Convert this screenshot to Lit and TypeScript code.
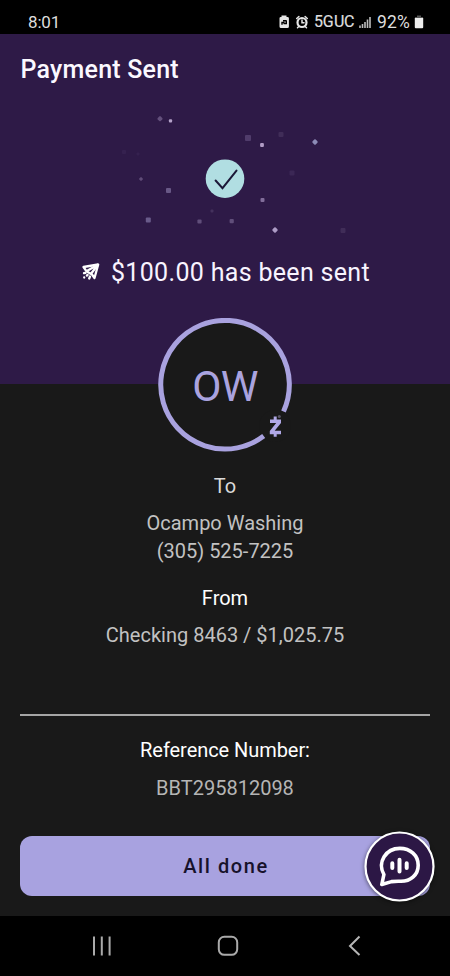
import { LitElement, html, css, svg } from "lit";
import { customElement } from "lit/decorators.js";

// Confetti around the check mark: x, y, size, colour, opacity, diamond
const CONFETTI: [number, number, number, string, number, boolean][] = [
  [160, 118.7, 4.2, "#75638e", 0.75, true],
  [170.5, 120.8, 3.2, "#b5a3ca", 1, false],
  [248, 138, 6, "#594574", 0.8, false],
  [262, 145, 3.8, "#b09bc4", 1, false],
  [281, 134.5, 5, "#4a3763", 0.65, false],
  [315, 142, 4.4, "#8c8bb6", 1, true],
  [124, 152, 4, "#3b2755", 0.6, false],
  [138, 154, 3, "#3b2755", 0.6, false],
  [141, 179, 3.2, "#6d5985", 0.8, true],
  [168.5, 190.5, 5, "#6f5f8d", 0.9, false],
  [292, 173, 5, "#412d5b", 0.7, false],
  [262.5, 200, 4, "#8b77a3", 0.9, false],
  [148.3, 220, 5, "#706391", 0.9, false],
  [212, 211, 3, "#4a3763", 0.8, false],
  [199.5, 221.5, 4.2, "#66547f", 0.9, false],
  [231.7, 221.2, 4.2, "#66547f", 0.9, false],
  [275, 230, 4.4, "#ad9cc6", 1, true],
  [343, 230.5, 5, "#49365f", 0.7, false],
];

@customElement("app-root")
export class AppRoot extends LitElement {
  static styles = css`
    :host {
      display: flex;
      flex-direction: column;
      width: 450px;
      height: 976px;
      overflow: hidden;
      background: #191919;
      font-family: Roboto, sans-serif;
      color: #fff;
    }
    svg { display: block; flex: none; }
    .status {
      height: 34px;
      flex: none;
      box-sizing: border-box;
      background: #000;
      display: flex;
      align-items: center;
      padding: 10px 26px 0 28px;
      color: #dedede;
      font-size: 17px;
      line-height: 24px;
      white-space: nowrap;
    }
    .time { flex: 1; letter-spacing: -0.15px; }
    .network { width: 41px; font-size: 16px; word-spacing: -3px; letter-spacing: -0.3px; margin: 0 4px 0 5px; -webkit-text-stroke: 0.2px #dedede; }
    .battery { width: 36px; margin: 0 1px 0 6px; font-size: 17.5px; letter-spacing: 0.2px; }
    .hero {
      height: 350px;
      flex: none;
      background: #2e1a47;
      display: flex;
      flex-direction: column;
      align-items: center;
    }
    h1 {
      margin: 20px 0 0 20.5px;
      align-self: flex-start;
      font-size: 25px;
      line-height: 32px;
      font-weight: 500;
      letter-spacing: 0.22px;
      color: #fbf8ff;
    }
    .burst { margin-top: 14px; }
    .sent {
      display: flex;
      align-items: center;
      margin-top: 17px;
      height: 36px;
      padding-left: 1px;
      font-size: 25px;
      line-height: 36px;
      color: #f8f4ff;
      letter-spacing: 0.32px;
      gap: 11px;
    }
    .details {
      flex: 1;
      display: flex;
      flex-direction: column;
      align-items: center;
      font-size: 20px;
      line-height: 28px;
      color: #c2c2c2;
    }
    .avatar {
      position: relative;
      width: 134px;
      height: 134px;
      margin-top: -66px;
    }
    .initials {
      position: absolute;
      inset: 0;
      text-align: center;
      line-height: 138px;
      font-size: 42.5px;
      letter-spacing: -0.8px;
      color: #aaa3df;
    }
    .label { color: #fff; }
    .to { color: #dadada; margin-top: 20px; }
    .name { margin-top: 9px; }
    .phone { margin-top: -0.5px; }
    .from { margin-top: 19px; }
    .account { margin-top: 9px; }
    .rule {
      width: 410px;
      height: 2px;
      background: #a5a5a5;
      margin-top: 65.5px;
    }
    .ref { margin-top: 20px; letter-spacing: -0.06px; }
    .number { margin-top: 9.5px; color: #b5b5b5; }
    .action { position: relative; width: 410px; margin-top: 34px; }
    button {
      display: block;
      width: 100%;
      height: 60px;
      border: 0;
      padding: 0 0 0 2px;
      border-radius: 12px;
      background: #a8a2e0;
      color: #17122b;
      font: 500 20px Roboto, sans-serif;
      letter-spacing: 1.6px;
    }
    .chat { position: absolute; right: -5px; top: -5px; filter: drop-shadow(0 1px 2px #0008); }
    .nav {
      height: 60px;
      flex: none;
      background: #000;
      display: flex;
      align-items: center;
      justify-content: space-between;
      padding: 0 83px 0 86px;
      box-sizing: border-box;
    }
    .home { position: relative; left: -3px; }
  `;

  render() {
    return html`
      <div class="status">
        <span class="time">8:01</span>
        <svg width="31" height="16" viewBox="0 0 31 16">
          <path fill="#e6e6e6" d="M3.500 1.500h5v1.400h1q1.400 0 1.400 1.400v8.200q0 1.500-1.500 1.500H3q-1.500 0-1.500-1.500V4.300q0-1.400 1.400-1.400h.6z"/>
          <path fill="none" stroke="#000" stroke-width="1.400" d="M4 10.700V8.500h2.500M8.300 6.200v3.300H5.500M5 6.800h3"/>
          <circle cx="24" cy="8.500" r="4.500" fill="none" stroke="#e6e6e6" stroke-width="2.200"/>
          <path fill="none" stroke="#e6e6e6" stroke-width="1.500" stroke-linecap="round" d="M18.700 4.500l2.200-2M29.300 4.500l-2.200-2M20.800 12.500l-1.300 1.300M27.200 12.500l1.300 1.300M24 6v2.700h2"/>
        </svg>
        <span class="network">5G UC</span>
        <svg width="12" height="14" viewBox="0 0 12 14">
          <path stroke="#bdbdbd" stroke-width="1.600" d="M1 13v-2.500M3.500 13V9M6 13V7M8.500 13V4.500M11 13V2"/>
        </svg>
        <span class="battery">92%</span>
        <svg width="10" height="14" viewBox="0 0 10 14">
          <path fill="#555" d="M3 .5h4v1.500h2v2H1V2h2z"/>
          <path fill="#eee" d="M.8 3h8.400v9.200q0 1-1 1H1.800q-1 0-1-1z"/>
        </svg>
      </div>
      <div class="hero">
        <h1>Payment Sent</h1>
        <svg class="burst" width="250" height="138" viewBox="100 100 250 138">
          ${CONFETTI.map(
            ([x, y, s, c, o, d]) => svg`<rect x=${x - s / 2} y=${y - s / 2} width=${s} height=${s}
              rx="1" fill=${c} opacity=${o} transform=${`rotate(${d ? 45 : 0} ${x} ${y})`}/>`
          )}
          <circle cx="225" cy="178.700" r="19.300" fill="#b1dee2"/>
          <path d="M215.600 180.500l6.900 7.600 14-17.500" fill="none" stroke="#1c1838" stroke-width="2" stroke-linecap="round"/>
        </svg>
        <div class="sent">
          <svg width="19" height="22" viewBox="0 0 19 22" fill="none" stroke="#fff" stroke-width="2.300" stroke-linejoin="round">
            <path d="M17.200 2.500L2.500 5 5.400 9.200 11 12.500 13.500 16z"/>
            <path d="M17.200 2.500L5.400 9.200M17.200 2.500L9.800 12"/>
            <path stroke-linecap="round" d="M4.500 10.800L3 11.200M6.600 13L5.900 13.500M3.200 15.500v.1M9 14.500L8.200 16.500"/>
          </svg>
          <span>$100.00 has been sent</span>
        </div>
      </div>
      <div class="details">
        <div class="avatar">
          <svg width="134" height="134" viewBox="158 318 134 134">
            <circle cx="225" cy="384.700" r="64" fill="#191919"/>
            <circle cx="275" cy="426" r="16" fill="#191919"/>
            <path d="M263.700 436.100A64.300 64.300 0 1 1 283.500 411.500" fill="none" stroke="#a9a2df" stroke-width="5"/>
            <path fill="#b0a8e6" d="M273.700 416.500h3v3h4.300v3.400l-6.300 7.800h6.300v3.600h-4.300v2.500h-3v-2.500h-3.900v-3.200l6.400-8h-6.200v-3.600h3.700z"/>
            <circle cx="279.300" cy="416.500" r="1.500" fill="#5a5668"/>
          </svg>
          <div class="initials">OW</div>
        </div>
        <div class="to">To</div>
        <div class="name">Ocampo Washing</div>
        <div class="phone">(305) 525-7225</div>
        <div class="label from">From</div>
        <div class="account">Checking 8463 / $1,025.75</div>
        <div class="rule"></div>
        <div class="label ref">Reference Number:</div>
        <div class="number">BBT295812098</div>
        <div class="action">
          <button>All done</button>
          <svg class="chat" width="71" height="71" viewBox="0 0 71 71">
            <circle cx="35.500" cy="35.500" r="34" fill="#2c1745" stroke="#fff" stroke-width="2.200"/>
            <path d="M19.900 43.500C13 31 22 17.400 35.800 17.400C46.500 17.400 54.200 24.500 54.200 34.200C54.200 44 46.500 50.300 37 50.300C33 50.300 30.500 50.200 27.500 50.600L17.800 53.500Z" fill="none" stroke="#fff" stroke-width="3.600" stroke-linejoin="round"/>
            <path d="M28.300 32.300v4.600M35.500 28.800v11.600M42.700 32.300v4.600" stroke="#fff" stroke-width="4" stroke-linecap="round"/>
          </svg>
        </div>
      </div>
      <div class="nav">
        <svg width="32" height="24" viewBox="0 0 32 24"><path d="M8 2.500v19M15.800 2.500v19M23.600 2.500v19" stroke="#aaa" stroke-width="2"/></svg>
        <svg class="home" width="24" height="24" viewBox="0 0 24 24"><rect x="2.800" y="2.800" width="18.400" height="18" rx="5.500" fill="none" stroke="#aaa" stroke-width="2"/></svg>
        <svg width="24" height="24" viewBox="0 0 24 24"><path d="M16.500 2.500L7 12l9.500 9" fill="none" stroke="#b5b5b5" stroke-width="2"/></svg>
      </div>
    `;
  }
}
